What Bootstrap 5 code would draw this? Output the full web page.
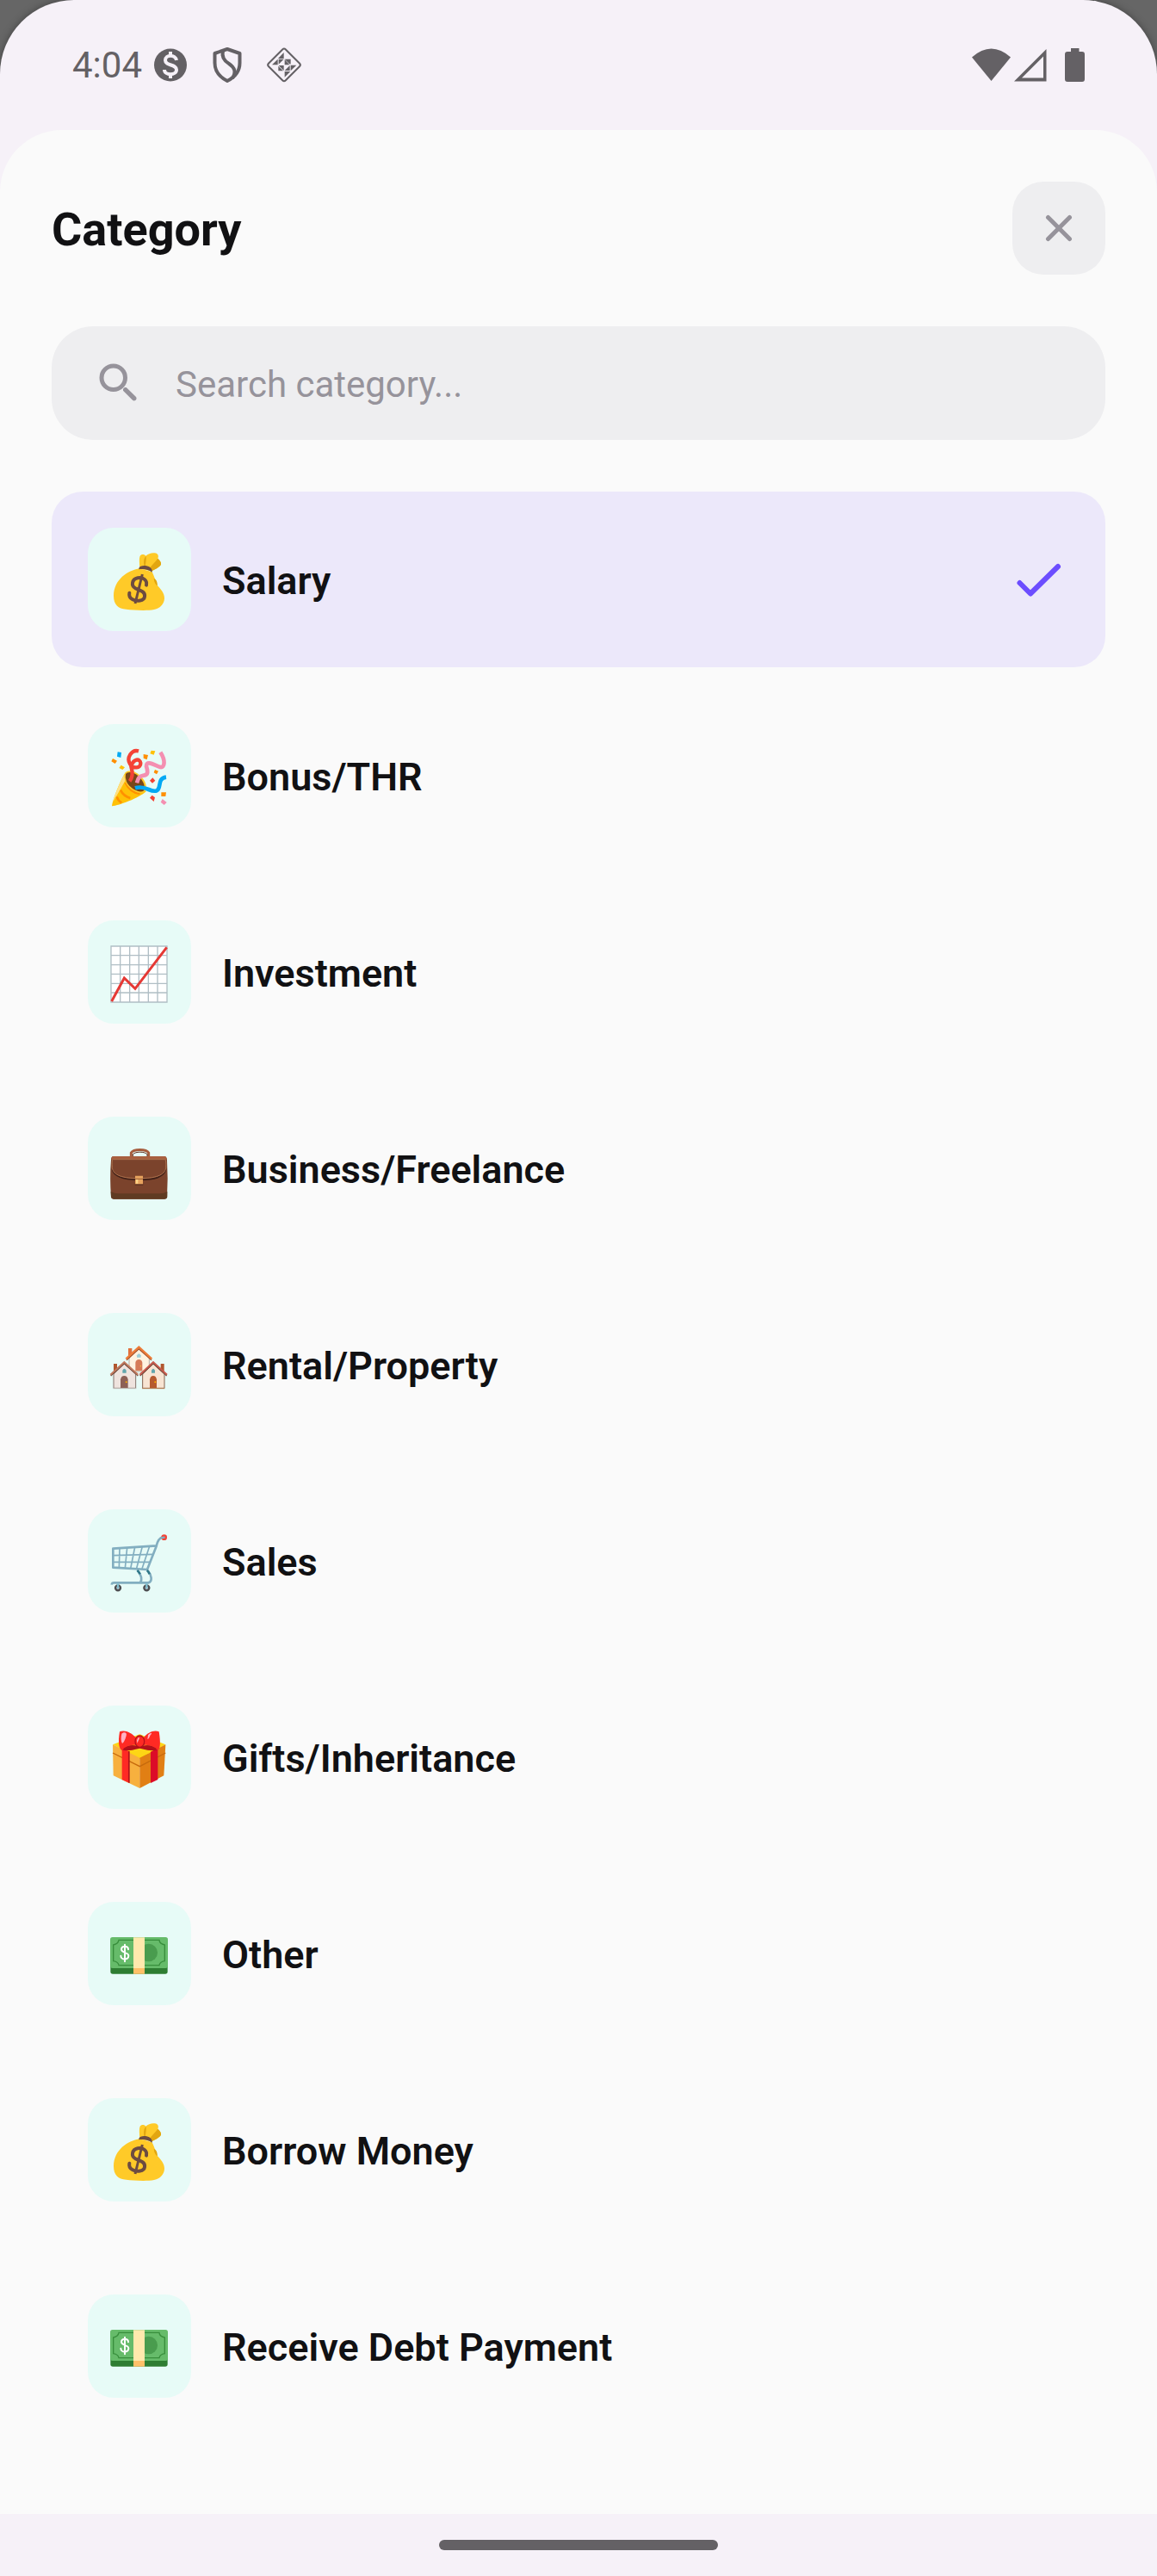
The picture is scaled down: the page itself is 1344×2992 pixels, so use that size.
<!DOCTYPE html>
<html lang="en">
<head>
<meta charset="utf-8">
<meta name="viewport" content="width=device-width, initial-scale=1">
<title>Category</title>
<link href="https://cdn.jsdelivr.net/npm/bootstrap@5.3.0/dist/css/bootstrap.min.css" rel="stylesheet">
<style>
  body { background: #666; font-family: Roboto, "Liberation Sans", sans-serif; color: #111113; }
  .screen { background: #f6f1f8; border-radius: 86px 86px 0 0; box-shadow: 0 0 10px rgba(0, 0, 0, .35); }
  .status-bar { height: 151px; padding: 0 84px; color: #646165; }
  .status-time { font-size: 42px; line-height: 48px; }
  .status-slot { width: 66px; height: 48px; }
  .signal-icons { gap: 4px; }
  .battery { margin-left: 17px; }
  .sheet { background: #fafafa; border-radius: 72px 72px 0 0; padding: 60px; gap: 60px; }
  .sheet-title { font-size: 54px; line-height: 64px; font-weight: 700; padding-top: 4px; }
  .close-btn { width: 108px; height: 108px; border-radius: 36px; background: #eeeef0; color: #96939b; }
  .search-box { height: 132px; border-radius: 48px; background: #eeeef0; color: #96939b; padding: 0 48px; gap: 36px; }
  .search-box .form-control { font-size: 42px; line-height: 48px; color: #111113; padding: 4px 0 0; }
  .search-box .form-control::placeholder { color: #96939b; opacity: 1; }
  .category-list { gap: 24px; }
  .category-list .list-group-item { height: 204px; padding: 0 42px; gap: 36px; border-radius: 36px; background: transparent; color: #111113; font-size: 45px; line-height: 54px; font-weight: 600; }
  .category-list .list-group-item.chosen { background: #ece8fa; }
  .category-list .list-group-item span { padding-top: 4px; }
  .tile { width: 120px; height: 120px; border-radius: 30px; background: #e7fbf7; flex: none; }
  .check { color: #6c4dff; }
  .nav-area { height: 72px; padding-top: 30px; }
  .nav-pill { width: 324px; height: 12px; border-radius: 6px; background: #646165; }
</style>
<script src="https://cdn.jsdelivr.net/npm/bootstrap@5.3.0/dist/js/bootstrap.bundle.min.js"></script>
</head>
<body>
<svg class="d-none" aria-hidden="true">
  <symbol id="money-bag" viewBox="6 9 360 360">
    <path fill="#ffca28" d="M187 152C187 138 183 115 189 106C194 100 204 101 208 107C216 100 229 95 239 97C251 99 254 107 250 116C256 122 263 129 261 137C253 149 240 153 229 160Z"/>
    <path fill="#e2a610" d="M203 144C200 129 200 116 209 107C210 120 208 132 206 144ZM222 149C230 138 242 127 250 116C256 122 263 129 261 137C253 149 240 153 229 160Z"/>
    <path fill="#ffca28" d="M186 151C145 158 97 189 96 246C96 277 112 291 140 293C164 296 210 299 237 294C259 289 272 275 273 255C274 237 258 220 249 211C244 202 240 183 230 163Z"/>
    <path fill="#e2a610" d="M236 185Q248 189 249 211Q237 203 236 185Z"/>
    <path fill="#6d4c41" d="M184 150C187 142 198 140 211 142C224 145 232 153 230 164C216 154 202 151 184 154Z"/>
    <path fill="none" stroke="#6d4c41" stroke-width="12" stroke-linecap="round" stroke-linejoin="round" d="M210 209C214 190 197 181 180 184C160 188 155 211 172 220C189 227 207 232 204 249C202 264 177 267 162 259C151 253 149 245 151 236"/>
    <path stroke="#6d4c41" stroke-width="9" d="M196 171L171 273"/>
  </symbol>
  <symbol id="cash" viewBox="36 57 360 360">
    <rect x="115" y="190" width="199" height="118" rx="8" fill="#2e7d32"/>
    <rect x="114" y="180" width="201" height="108" rx="8" fill="#66bb6a"/>
    <path fill="none" stroke="#388e3c" stroke-width="4" d="M144 190H285Q286 203 304 207V263Q287 266 285 278H144Q142 266 125 263V207Q142 203 144 190Z"/>
    <circle cx="248" cy="234" r="31" fill="#499c4e"/>
    <path fill="#ffe9ad" d="M195 181H234V288H195Z"/><path fill="#ffc069" d="M195 288H234V308H195Z"/>
    <path fill="none" stroke="#fff" stroke-width="6" stroke-linecap="round" d="M177 223C177 209 153 209 153 223C153 236 178 231 178 245C178 261 151 260 151 245M165 206V265"/>
  </symbol>
</svg>

<div class="screen min-vh-100 d-flex flex-column">
  <header class="status-bar d-flex justify-content-between align-items-center">
    <div class="d-flex align-items-center">
      <span class="status-time">4:04</span>
      <svg class="status-slot" viewBox="166 52 66 48" aria-hidden="true">
        <circle cx="199" cy="75.500" r="19" fill="currentColor"/>
        <path fill="none" stroke="#f6f1f8" stroke-width="4" d="M206 70C205 63 193 63 193 70C193 77 206 74 206 81C206 88 192 88 192 81M199 60V66M199 85V91"/>
      </svg>
      <svg class="status-slot" viewBox="232 52 66 48" aria-hidden="true">
        <path fill="none" stroke="currentColor" stroke-width="4" stroke-linejoin="round" d="M265 57L279.500 62V73C279.500 83 273 90 265 94C257 90 250.500 83 250.500 73V62Z"/>
        <path fill="none" stroke="currentColor" stroke-width="4" d="M260 59C258 67 262 71 267 74C273 78 276 83 271 91"/>
      </svg>
      <svg class="status-slot" viewBox="-24 6 198 144" aria-hidden="true">
        <rect x="33" y="34" width="84" height="84" rx="8" fill="none" stroke="currentColor" stroke-width="6" transform="rotate(45 75 76)"/>
        <path fill="currentColor" d="M74 33V54H54ZM53 56V76H33ZM56 56H74L56 74ZM77 56H95V74ZM77 58L94 76H77ZM98 56V74L80 56ZM56 78H74V96ZM77 96L95 78V96ZM98 77H118L98 97ZM55 80V97H72ZM77 99H97L77 119Z"/>
      </svg>
    </div>
    <div class="signal-icons d-flex align-items-center">
      <svg width="45" height="40" viewBox="1129 55 45 40" aria-hidden="true"><path fill="currentColor" d="M1129 65.500Q1151.500 45.500 1174 65.500L1151.500 93Z"/></svg>
      <svg width="38" height="40" viewBox="1178 55 38 40" aria-hidden="true"><path fill="currentColor" fill-rule="evenodd" d="M1178 93.500L1215.500 56V93.500ZM1187 89.500H1212V64.500Z"/></svg>
      <svg class="battery" width="23" height="40" viewBox="1237 55 23 40" aria-hidden="true"><path fill="currentColor" d="M1244 55H1253.500V59H1257Q1260 59 1260 62V91Q1260 94 1257 94H1240Q1237 94 1237 91V62Q1237 59 1240 59H1244Z"/></svg>
    </div>
  </header>

  <main class="sheet flex-grow-1 d-flex flex-column">
    <div class="d-flex justify-content-between align-items-center">
      <h1 class="sheet-title mb-0">Category</h1>
      <button type="button" class="close-btn btn border-0 p-0 d-flex align-items-center justify-content-center" aria-label="Close">
        <svg width="36" height="36" viewBox="0 0 36 36" aria-hidden="true"><path fill="none" stroke="currentColor" stroke-width="5" stroke-linecap="round" d="M5.500 5.500L30.500 30.500M30.500 5.500L5.500 30.500"/></svg>
      </button>
    </div>

    <div class="search-box d-flex align-items-center">
      <label for="search" class="d-flex" aria-label="Search category">
        <svg width="60" height="60" viewBox="0 0 24 24" aria-hidden="true"><circle cx="9.500" cy="9.500" r="5.500" fill="none" stroke="currentColor" stroke-width="2"/><path fill="currentColor" d="M15.500 14H14.700L14 14.700V15.500L18.300 19.800C19.400 20.900 21 19.300 19.800 18.200Z"/></svg>
      </label>
      <input id="search" type="text" class="form-control border-0 bg-transparent shadow-none" placeholder="Search category...">
    </div>

    <div class="category-list list-group list-group-flush">
      <button type="button" class="list-group-item chosen border-0 d-flex align-items-center text-start" aria-current="true">
        <svg class="tile" aria-hidden="true"><use href="#money-bag"/></svg>
        <span class="flex-grow-1">Salary</span>
        <svg class="check" width="66" height="66" viewBox="1176 640 66 66" aria-hidden="true"><path fill="none" stroke="currentColor" stroke-width="6" stroke-linecap="round" stroke-linejoin="round" d="M1184.500 677L1197 689.500L1229 658"/></svg>
      </button>
      <button type="button" class="list-group-item border-0 d-flex align-items-center text-start">
        <svg class="tile" viewBox="36 63 360 360" aria-hidden="true">
          <path fill="#ffc107" d="M168 231C155 246 121 328 120 349C145 347 214 321 239 298Z"/>
          <path fill="#ffe082" d="M166 238L158 247C145 276 130 306 124 334C143 302 162 271 171 250Z"/>
          <path fill="none" stroke="#ff9100" stroke-width="8" d="M167 267Q184 302 217 306M150 293Q160 314 184 321M137 316Q141 330 154 337"/>
          <path fill="#ffca28" d="M165 235C172 221 198 223 219 243C242 264 245 289 233 301C215 308 180 293 168 266Q161 249 165 235Z"/>
          <path fill="#784719" d="M168 238C174 226 198 230 214 246C233 264 238 286 230 296C215 304 184 289 171 264Q165 249 168 238Z"/>
          <path fill="none" stroke="#f44336" stroke-width="13" d="M213 157C188 150 170 182 183 202C194 220 221 217 220 199C218 181 194 184 187 211C193 232 193 249 182 262"/>
          <path fill="none" stroke="#f48fb1" stroke-width="14" d="M289 161C308 190 304 215 289 213C270 207 239 187 240 210C245 226 248 240 231 242C213 244 211 255 207 268"/>
          <path fill="none" stroke="#03a9f4" stroke-width="14" d="M309 248C276 252 294 287 276 295C255 304 238 274 201 286"/>
          <path fill="#ff8f00" d="M123 183L138 191L131 201L118 193ZM230 168L246 171L242 187L230 182ZM270 222L282 227L276 238L266 232ZM292 301L309 301L307 315H292Z"/>
          <path fill="#ffc107" d="M152 206L165 214L157 222L145 216ZM257 155L271 157L266 170L253 166Z"/>
          <path fill="#03a9f4" d="M140 160L153 162L151 180L138 176Z"/>
          <path fill="#f44336" d="M262 250L271 260L261 269L252 260ZM260 311L270 319L266 333L252 320Z"/>
          <path fill="#f48fb1" d="M296 324L311 336L302 345L290 335Z"/>
        </svg>
        <span>Bonus/THR</span>
      </button>
      <button type="button" class="list-group-item border-0 d-flex align-items-center text-start">
        <svg class="tile" viewBox="36 747 360 360" aria-hidden="true">
          <rect x="117" y="837" width="195" height="195" fill="#fff"/>
          <path fill="none" stroke="#b0bec5" stroke-width="4" d="M117 837H312V1032H117ZM149 837V1032M182 837V1032M214 837V1032M247 837V1032M279 837V1032M117 869H312M117 902H312M117 934H312M117 967H312M117 999H312"/>
          <path fill="none" stroke="#e53935" stroke-width="9" d="M119 1029L163 948L201 985L311 841"/>
        </svg>
        <span>Investment</span>
      </button>
      <button type="button" class="list-group-item border-0 d-flex align-items-center text-start">
        <svg class="tile" viewBox="6 6 360 360" aria-hidden="true">
          <path fill="none" stroke="#a65d3d" stroke-width="9" d="M157 145V132C165 118 210 118 218 132V145"/>
          <path fill="none" stroke="#5c3020" stroke-width="3" d="M163 145V137C172 127 204 127 213 137V145"/>
          <path fill="#7b432c" d="M94 145H274Q281 145 282 157Q286 220 282 286Q281 293 273 293H96Q88 293 87 286Q82 220 87 157Q87 145 94 145Z"/>
          <path fill="#603b22" d="M86 267Q100 274 112 274H256Q272 274 283 267V285Q282 293 273 293H96Q88 293 87 286Z"/>
          <path fill="#a85f3f" d="M94 144H274Q281 145 281 156H88Q88 145 94 144Z"/>
          <path fill="none" stroke="#3e1f17" stroke-width="5" d="M91 188C97 217 132 226 184 226C239 226 272 217 278 188"/>
          <path fill="#7b432c" stroke="#ab704c" stroke-width="3" d="M94 155H274Q280 155 278 184C275 211 240 221 184 221C130 221 94 211 91 184Q89 155 94 155Z"/>
          <path fill="#633523" d="M170 240H199V246H170Z"/><path fill="#e7a35e" d="M171 212H198V241H171Z"/><path fill="#ffd58a" d="M174 224H181V239H174Z"/><path stroke="#955b35" stroke-width="3" d="M171 223H198"/>
        </svg>
        <span>Business/Freelance</span>
      </button>
      <button type="button" class="list-group-item border-0 d-flex align-items-center text-start">
        <svg class="tile" viewBox="6 690 360 360" aria-hidden="true">
          <path fill="#e0713c" d="M147 813H160V845H147Z"/>
          <path fill="#fff3e0" stroke="#b7aaa0" stroke-width="3" d="M150 845L184 812L220 845V894H150Z"/>
          <path fill="none" stroke="#9e4a22" stroke-width="4" d="M141 854L184 815L228 854"/>
          <path fill="none" stroke="#ec7b38" stroke-width="7" d="M139 850L184 809L229 850"/>
          <path fill="#9fd0d8" d="M177 845V838Q184 825 191 838V845Z"/><path fill="#d67b57" d="M172 891V863Q174 852 184 852Q194 852 196 863V891Z"/><circle cx="190" cy="875" r="2" fill="#ffca28"/>
          <path fill="#b0572f" d="M96 867H108V898H96ZM260 867H272V898H260Z"/>
          <path fill="#efe3de" stroke="#85736d" stroke-width="3" d="M96 903L133 867L173 903V952H96Z"/>
          <path fill="#f8e4d2" stroke="#85634f" stroke-width="3" d="M197 903L234 867L273 903V952H197Z"/>
          <path fill="none" stroke="#70483a" stroke-width="4" d="M86 909L133 866L181 909M188 909L234 866L281 909"/>
          <path fill="none" stroke="#c1785d" stroke-width="6" d="M85 905L133 861L181 905"/>
          <path fill="none" stroke="#c85a4c" stroke-width="6" d="M187 905L234 861L282 905"/>
          <path fill="#62a6ad" d="M127 899V890Q133 879 140 890V899ZM228 899V890Q234 879 240 890V899Z"/>
          <path fill="#8d6056" d="M120 951V922Q122 909 133 909Q144 909 146 922V951Z"/><path fill="#b65a2f" d="M222 951V922Q224 909 234 909Q244 909 246 922V951Z"/>
          <circle cx="140" cy="931" r="3" fill="#ffb300"/><circle cx="241" cy="931" r="3" fill="#ffb300"/>
          <path stroke="#c3bfbb" stroke-width="3" d="M94 953H175"/><path stroke="#b98154" stroke-width="3" d="M195 953H274"/>
        </svg>
        <span>Rental/Property</span>
      </button>
      <button type="button" class="list-group-item border-0 d-flex align-items-center text-start">
        <svg class="tile" viewBox="36 39 360 360" aria-hidden="true">
          <g fill="none" stroke="#82aec0">
            <path stroke-width="5" d="M147 174L145 242M173 173L166 244M200 171L185 246M226 169L205 248M251 168L224 249M124 200L264 196M124 223L254 223"/>
            <path stroke-width="8" stroke-linejoin="round" d="M297 136C286 139 280 147 275 166L124 176V242L243 249L276 165M209 252C222 268 227 282 219 294M245 252C258 268 263 291 247 295H127Q120 295 119 302"/>
          </g>
          <path fill="none" stroke="#2f7889" stroke-width="8" d="M208 252Q214 256 218 265M242 252Q248 256 251 265"/>
          <circle cx="302" cy="137" r="10" fill="#f44336"/><path stroke="#82aec0" stroke-width="7" stroke-linecap="round" d="M291 139L302 137"/>
          <circle cx="141" cy="313" r="9" fill="#b0bec5" stroke="#4d4d50" stroke-width="7"/><circle cx="241" cy="313" r="9" fill="#b0bec5" stroke="#4d4d50" stroke-width="7"/>
          <path stroke="#82bfd0" stroke-width="7" stroke-linecap="round" d="M141 300V312M241 300V312"/>
        </svg>
        <span>Sales</span>
      </button>
      <button type="button" class="list-group-item border-0 d-flex align-items-center text-start">
        <svg class="tile" viewBox="36 723 360 360" aria-hidden="true">
          <path fill="#fdd615" d="M123 859L217 823L307 859L217 910Z"/>
          <path fill="#f7b03e" d="M123 859L217 905V1011L125 967Z"/>
          <path fill="#e17f14" d="M307 859L217 905V1011L301 967Z"/>
          <path fill="none" stroke="#c66a0d" stroke-width="4" d="M123 888L217 935L307 888"/>
          <path fill="#ff2a24" d="M155 874L180 882V993L155 981Z"/><path fill="#b3101b" d="M177 882H182V993L177 991Z"/>
          <path fill="#dc0c28" d="M255 884L280 872V981L255 993Z"/>
          <path fill="#b3101b" d="M155 877Q170 855 217 864Q264 855 281 877Q263 884 217 872Q171 884 155 877Z"/>
          <path fill="#fdd615" d="M183 887L217 873L253 887L217 902Z"/>
          <path fill="#ff2a24" d="M147 814C164 806 188 817 204 835V861C186 857 169 865 155 879Q138 870 147 814ZM284 814C267 806 244 817 230 835V861C248 857 265 865 280 879Q293 870 284 814Z"/>
          <path fill="#b3101b" d="M159 873Q184 856 204 864L189 877Q172 880 159 873ZM276 873Q250 856 230 864L245 877Q262 880 276 873Z"/>
          <ellipse cx="217" cy="848" rx="16" ry="20" fill="#ff2a24" stroke="#b3101b" stroke-width="4"/>
          <path fill="#ffb3c4" d="M154 821C165 812 173 818 170 828C166 843 161 853 156 855Q149 843 154 821ZM246 826C253 817 261 818 257 823C250 829 251 840 244 840ZM207 845C211 832 217 832 215 839L208 854Z"/>
        </svg>
        <span>Gifts/Inheritance</span>
      </button>
      <button type="button" class="list-group-item border-0 d-flex align-items-center text-start">
        <svg class="tile" aria-hidden="true"><use href="#cash"/></svg>
        <span>Other</span>
      </button>
      <button type="button" class="list-group-item border-0 d-flex align-items-center text-start">
        <svg class="tile" aria-hidden="true"><use href="#money-bag"/></svg>
        <span>Borrow Money</span>
      </button>
      <button type="button" class="list-group-item border-0 d-flex align-items-center text-start">
        <svg class="tile" aria-hidden="true"><use href="#cash"/></svg>
        <span>Receive Debt Payment</span>
      </button>
    </div>
  </main>

  <footer class="nav-area d-flex justify-content-center">
    <div class="nav-pill"></div>
  </footer>
</div>
</body>
</html>
